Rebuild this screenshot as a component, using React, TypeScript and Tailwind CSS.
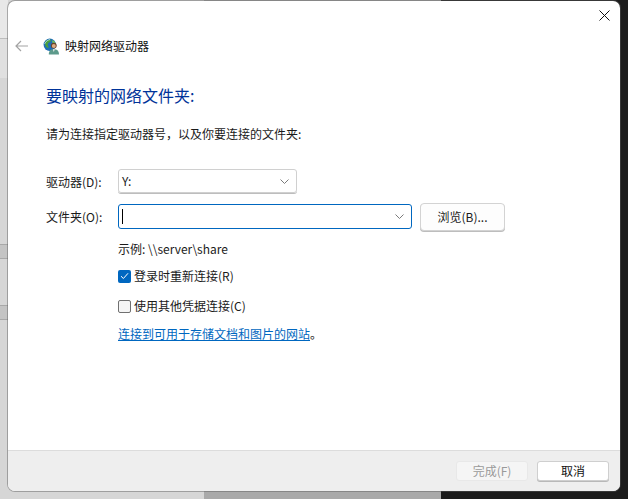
function Chevron({ className }: { className?: string }) {
  return (
    <svg width="9" height="5" viewBox="0 0 9 5" fill="none" className={className}>
      <path d="M0.5 0.5 L4.5 4.5 L8.5 0.5" stroke="#7a7a7a" strokeWidth="1" />
    </svg>
  );
}

function GlobeUser() {
  return (
    <svg width="17" height="17" viewBox="0 0 17 17" className="shrink-0">
      <circle cx="6.8" cy="6.8" r="6.2" fill="#1f6fb5" />
      <path d="M2 4 C4 1.5 7 1 8 2 C8 4 6 4 5 5.5 C4 7.5 6 8 5.5 10 C3.5 10 1.5 7 2 4 Z" fill="#4aa03c" />
      <path d="M9.5 2 C11.5 3 12.5 5 12.5 6 C11 6 10 5 9 4 Z" fill="#6fbd58" />
      <path d="M1.5 6 C3 3 5 2 7 1.5" stroke="#bfe3f7" strokeWidth="0.8" fill="none" />
      <circle cx="10.8" cy="7.6" r="2.9" fill="#6b4228" />
      <circle cx="10.8" cy="8" r="2" fill="#d9ab85" />
      <path d="M5.8 16.5 C5.8 12.5 8 11.3 10.8 11.3 C13.6 11.3 16 12.5 16 16.5 Z" fill="#5d9a8b" />
      <path d="M9.8 11.3 L10.8 14 L11.8 11.3 Z" fill="#f0f0f0" />
    </svg>
  );
}

export default function App() {
  return (
    <div
      className="relative flex h-[499px] w-[628px] overflow-hidden bg-[#1c1c1c] text-[12px] text-[#1a1a1a]"
      style={{ fontFamily: '"Noto Sans CJK SC", "Noto Sans", sans-serif' }}
    >
      {/* desktop behind the dialog */}
      <div className="absolute left-0 top-0 h-[499px] w-[441px] bg-[#a9a9a9]" />
      <div className="absolute left-0 top-0 h-[499px] w-[204px] bg-[#d6d6d6]" />
      <div className="absolute left-0 top-0 h-[38px] w-[8px] bg-[#e8e8e8]" />
      <div className="absolute left-0 top-[38px] h-[40px] w-[8px] border-t border-[#bdbdbd] bg-[#e0e0e0]" />
      <div className="absolute left-0 top-[244px] h-[15px] w-[8px] border-y border-[#a8a8a8] bg-[#c4c4c4]" />
      <div className="absolute left-0 top-[305px] h-[15px] w-[8px] border-y border-[#a8a8a8] bg-[#c4c4c4]" />

      {/* dialog */}
      <div className="relative ml-[8px] mt-[1px] flex h-[490px] w-[612px] flex-col overflow-hidden rounded-[7px] bg-white shadow-[0_0_0_1px_rgba(90,90,90,0.45)]">
        <div className="flex flex-1 flex-col">
          <div className="flex h-[30px] items-start justify-end pr-[10px] pt-[9px]">
            <svg width="11" height="11" viewBox="0 0 11 11" fill="none">
              <path d="M0.5 0.5 L10.5 10.5 M10.5 0.5 L0.5 10.5" stroke="#111" strokeWidth="1" />
            </svg>
          </div>
          <div className="flex h-[30px] items-center pl-[7px]">
            <svg width="14" height="12" viewBox="0 0 14 12" fill="none" className="mr-[14px]">
              <path d="M13 6 H1 M6 1 L1 6 L6 11" stroke="#a3a3a3" strokeWidth="1.2" />
            </svg>
            <GlobeUser />
            <span className="ml-[5px] text-[12px] leading-[16px] text-[#111]">映射网络驱动器</span>
          </div>

          <div className="pl-[38px] pt-[23px]">
            <div className="text-[16px] leading-[22px] text-[#003399]">要映射的网络文件夹:</div>
            <div className="mt-[20px] leading-[16px]">请为连接指定驱动器号，以及你要连接的文件夹:</div>

            <div className="mt-[27px] flex h-[24px] items-center">
              <span className="w-[72px] pt-[2px] leading-[16px]">驱动器(D):</span>
              <div className="flex h-[24px] w-[179px] items-center justify-between rounded-[3px] border border-[#d0d0d0] pl-[3px] pr-[3px] shadow-[0_1px_0_#bdbdbd]">
                <span className="leading-[16px]">Y:</span>
                <Chevron className="mr-[4px]" />
              </div>
            </div>

            <div className="mt-[10px] flex h-[26px] items-center">
              <span className="w-[72px] pt-[2px] leading-[16px]">文件夹(O):</span>
              <div className="flex h-[25px] w-[294px] items-center justify-between rounded-[3px] border border-[#0067c0] pl-[3px] pr-[3px]">
                <span className="h-[15px] w-px bg-black" />
                <Chevron className="mr-[4px]" />
              </div>
              <div className="ml-[8px] mt-[2px] flex h-[28px] w-[85px] items-center justify-center rounded-[4px] border border-[#d3d3d3] bg-[#fdfdfd] shadow-[0_1px_0_#bdbdbd]">
                浏览(B)...
              </div>
            </div>

            <div className="ml-[72px]">
              <div className="mt-[12px] leading-[16px]">示例: \\server\share</div>
              <div className="mt-[11px] flex h-[16px] items-center">
                <span className="flex h-[13px] w-[13px] items-center justify-center rounded-[2px] bg-[#0067c0]">
                  <svg width="9" height="8" viewBox="0 0 9 8" fill="none">
                    <path d="M1 4.2 L3.4 6.5 L8 1.3" stroke="#fff" strokeWidth="1" />
                  </svg>
                </span>
                <span className="ml-[3px] leading-[16px]">登录时重新连接(R)</span>
              </div>
              <div className="mt-[14px] flex h-[16px] items-center">
                <span className="h-[13px] w-[13px] rounded-[2px] border border-[#707070] bg-[#f5f5f5]" />
                <span className="ml-[3px] leading-[16px]">使用其他凭据连接(C)</span>
              </div>
              <div className="mt-[12px] leading-[16px]">
                <span className="text-[#0067c0] underline">连接到可用于存储文档和图片的网站</span>。
              </div>
            </div>
          </div>
        </div>

        <div className="flex h-[41px] items-start justify-end gap-[9px] border-t border-[#dcdcdc] bg-[#eeeeee] pr-[11px] pt-[10px]">
          <div className="flex h-[20px] w-[72px] items-center justify-center rounded-[3px] border border-[#e8e8e8] bg-[#f5f5f5] text-[#9a9a9a]">
            完成(F)
          </div>
          <div className="flex h-[20px] w-[72px] items-center justify-center rounded-[3px] border border-[#cfcfcf] bg-white text-[#111] shadow-[0_1px_0_#b8b8b8]">
            取消
          </div>
        </div>
      </div>
    </div>
  );
}
